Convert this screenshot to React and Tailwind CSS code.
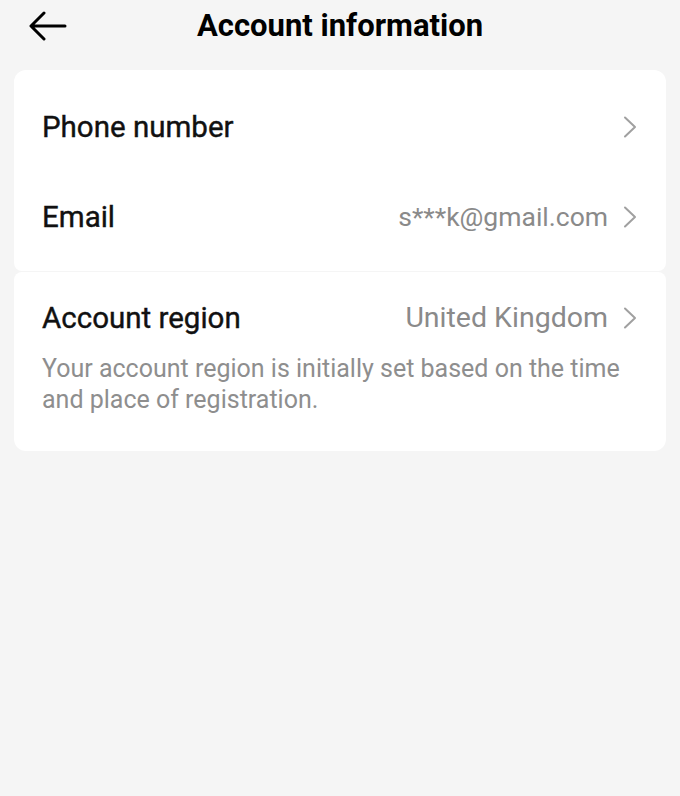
function Chevron() {
  return (
    <svg width="14" height="22" viewBox="0 0 14 22" fill="none" stroke="#a0a0a0" strokeWidth="2" strokeLinecap="round" strokeLinejoin="round">
      <path d="M2 1.5l10 9.5-10 9.5" />
    </svg>
  );
}

function Row({ label, value, valueClass = "text-[28px]", className = "" }) {
  return (
    <div className={`flex items-center justify-between ${className}`}>
      <span className="text-[29.5px] text-[#111] font-normal [-webkit-text-stroke:0.4px_#111]">{label}</span>
      <div className="flex items-center gap-[15px] mr-[1px]">
        {value && <span className={`${valueClass} text-[#8a8a8a]`}>{value}</span>}
        <Chevron />
      </div>
    </div>
  );
}

export default function App() {
  return (
    <div
      className="min-h-screen w-[680px] bg-[#f5f5f5]"
      style={{ fontFamily: "Roboto, 'Liberation Sans', sans-serif" }}
    >
      <header className="relative h-[52px] flex items-center justify-center">
        <button className="absolute left-[29px] top-[11px]">
          <svg width="38" height="30" viewBox="0 0 38 30" fill="none" stroke="black" strokeWidth="3" strokeLinecap="round" strokeLinejoin="round">
            <path d="M36 15H3M15 2L2 15l13 13" />
          </svg>
        </button>
        <h1 className="text-[31px] font-bold text-black">Account information</h1>
      </header>

      <div className="mx-[14px] mt-[18px]">
        <div className="bg-white rounded-t-[12px] rounded-b-[8px] px-[28px] pt-[12px] pb-[9px]">
          <Row label="Phone number" className="h-[90px]" />
          <Row label="Email" value="s***k@gmail.com" valueClass="text-[26.5px]" className="h-[90px]" />
        </div>
        <div className="bg-white rounded-[8px] rounded-b-[12px] mt-[1px] px-[28px] pt-[26px] pb-[36px]">
          <Row label="Account region" value="United Kingdom" valueClass="text-[28.5px]" className="h-[40px]" />
          <p className="mt-[15px] text-[25px] leading-[31px] text-[#8e8e8e]">
            Your account region is initially set based on the time and place of registration.
          </p>
        </div>
      </div>
    </div>
  );
}
